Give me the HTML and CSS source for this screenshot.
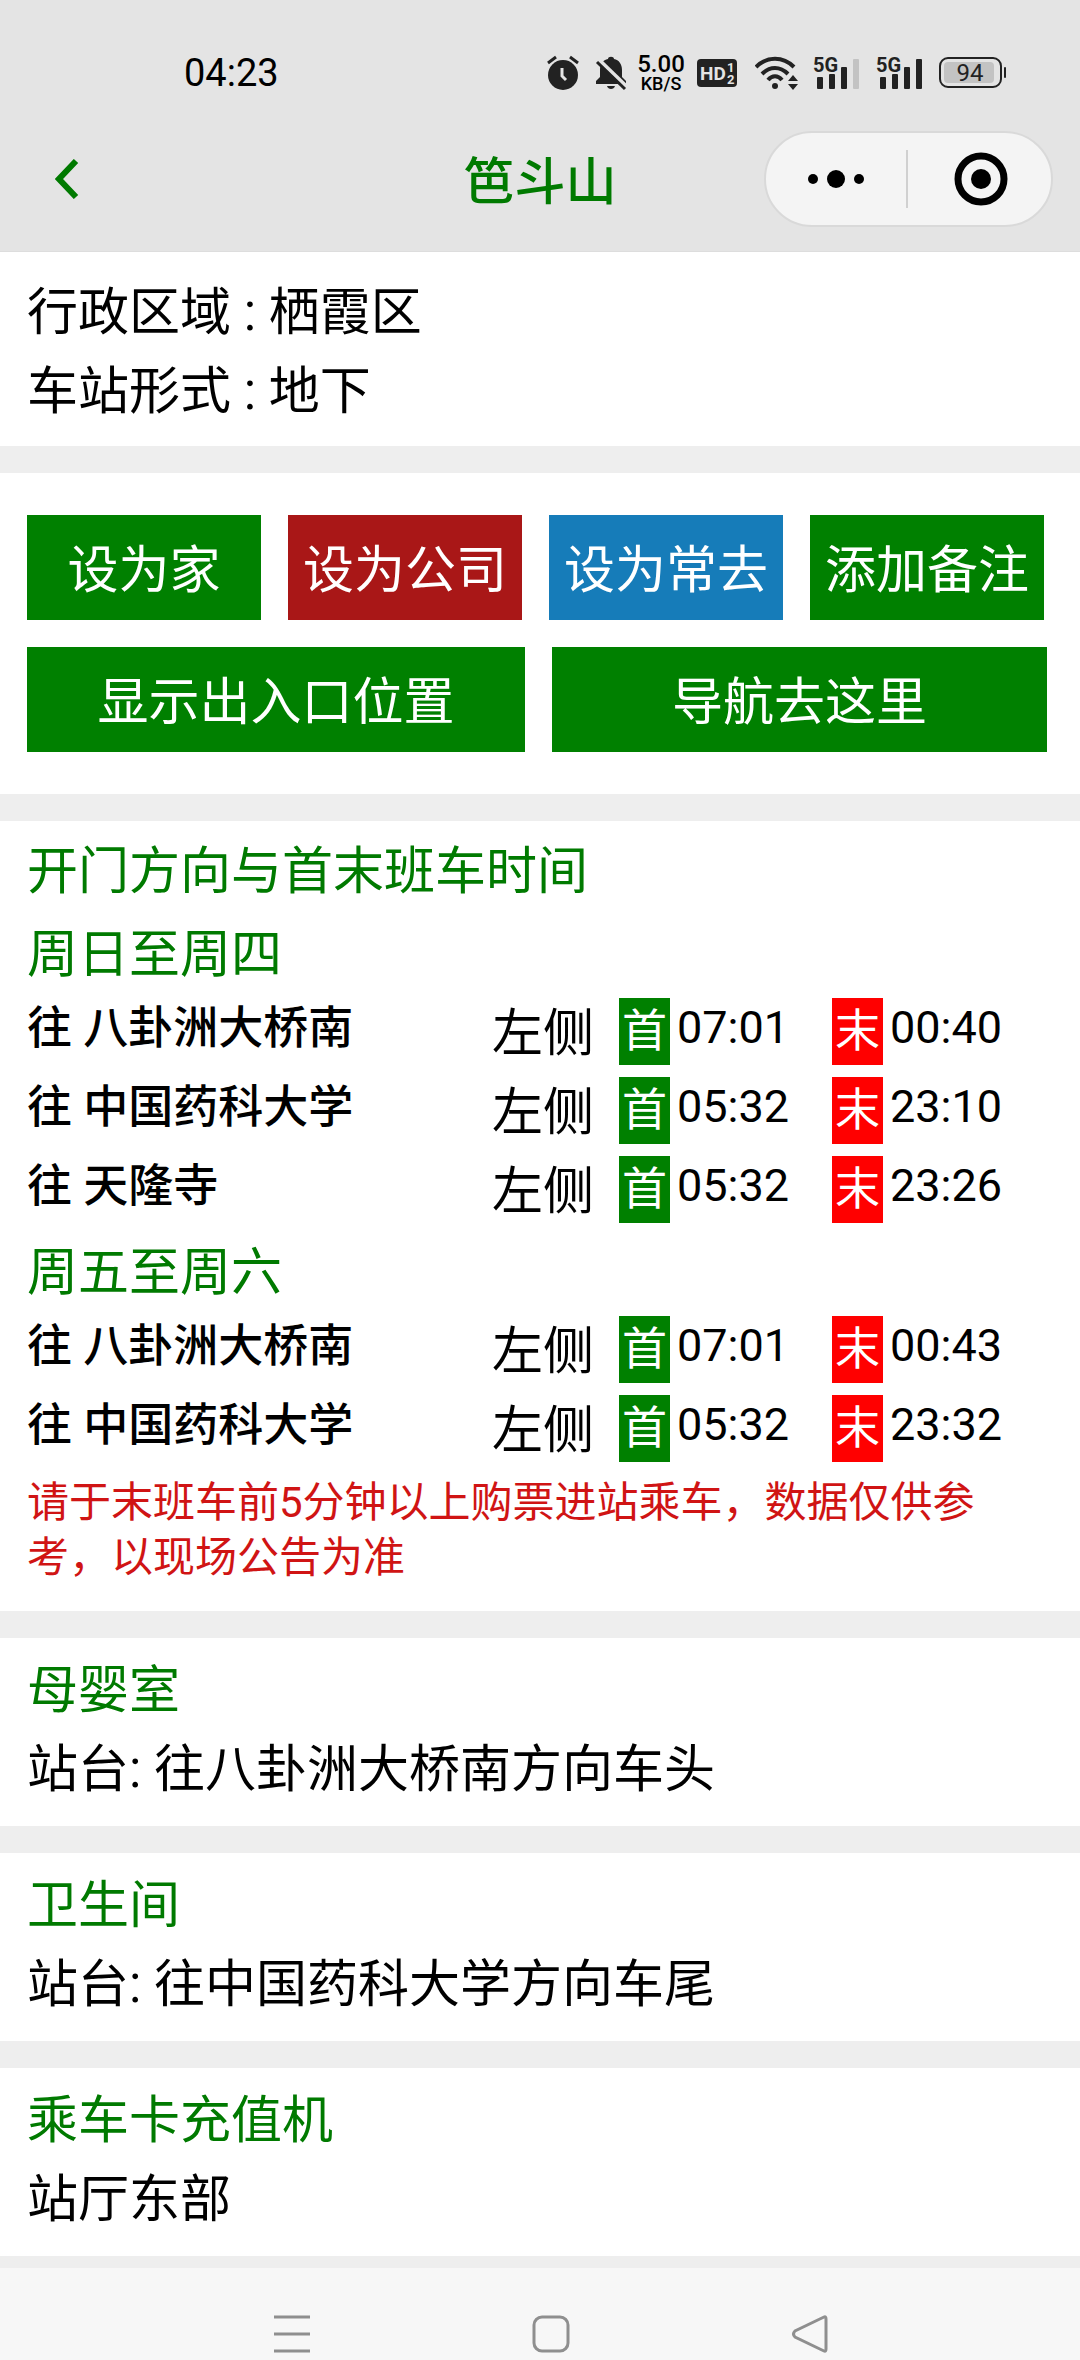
FILE: index.html
```html
<!DOCTYPE html>
<html lang="zh-CN">
<head>
  <meta charset="UTF-8" />
  <meta name="viewport" content="width=device-width, initial-scale=1.0"/>
  <title>笆斗山</title>
  <link rel="stylesheet" href="styles.css">
</head>
<body>

<header class="header">
  <div class="status-bar">
    <span class="clock">04:23</span>
    <div class="status-icons">
      <!-- alarm -->
      <svg width="32" height="36" viewBox="0 0 32 36">
        <circle cx="16" cy="20" r="15" fill="#222"/>
        <path d="M1 8L9 2M31 8L23 2" stroke="#222" stroke-width="3" fill="none"/>
        <path d="M15 13V21L19 25" stroke="#e4e4e4" stroke-width="3" fill="none"/>
      </svg>
      <!-- muted bell -->
      <svg width="32" height="36" viewBox="0 0 32 36">
        <path d="M1 29V26L5 22V15C5 9 8 5 13 4C13 1 19 1 19 4C24 5 27 9 27 15V22L31 26V29Z" fill="#222"/>
        <path d="M12 31H20C19 35 13 35 12 31Z" fill="#222"/>
        <path d="M4 5L32 32" stroke="#e4e4e4" stroke-width="4"/>
        <path d="M2 7L30 34" stroke="#222" stroke-width="3"/>
      </svg>
      <div class="net-speed"><span>5.00</span><span class="unit">KB/S</span></div>
      <svg class="hd" width="40" height="28" viewBox="0 0 40 28">
        <rect width="40" height="28" rx="4" fill="#222"/>
        <text x="3" y="21" class="hd-text">HD</text>
        <text x="30" y="13" class="hd-num">1</text>
        <text x="30" y="25" class="hd-num">2</text>
      </svg>
      <!-- wifi -->
      <svg class="wifi" width="44" height="36" viewBox="0 0 44 36">
        <path d="M1 12C12 1 28 1 39 12M7 19C15 11 25 11 33 19M13 25C17 20 23 20 27 25" stroke="#222" stroke-width="4" fill="none"/>
        <circle cx="20" cy="31" r="3" fill="#222"/>
        <path d="M33 26L38 20L43 26ZM33 29L38 35L43 29Z" fill="#222"/>
      </svg>
      <svg class="signal" width="47" height="44" viewBox="0 -4 47 44">
        <text x="0" y="17" class="g5">5G</text>
        <rect x="4" y="22" width="6" height="12" rx="1" fill="#222"/>
        <rect x="16" y="19" width="6" height="15" rx="1" fill="#222"/>
        <rect x="28" y="12" width="6" height="22" rx="1" fill="#222"/>
        <rect x="40" y="4" width="6" height="30" rx="1" fill="#c3c3c3"/>
      </svg>
      <svg class="signal" width="47" height="44" viewBox="0 -4 47 44">
        <text x="0" y="17" class="g5">5G</text>
        <rect x="4" y="22" width="6" height="12" rx="1" fill="#222"/>
        <rect x="16" y="19" width="6" height="15" rx="1" fill="#222"/>
        <rect x="28" y="12" width="6" height="22" rx="1" fill="#222"/>
        <rect x="40" y="4" width="6" height="30" rx="1" fill="#222"/>
      </svg>
      <!-- battery -->
      <svg class="battery" width="68" height="32" viewBox="0 0 68 32">
        <rect x="1" y="1" width="61" height="29" rx="8" fill="none" stroke="#222" stroke-width="2"/>
        <rect x="5" y="5" width="50" height="21" rx="4" fill="#c3c3c3"/>
        <rect x="65" y="10" width="2" height="11" rx="1" fill="#222"/>
        <text x="31" y="24" text-anchor="middle" class="bat-text">94</text>
      </svg>
    </div>
  </div>
  <div class="title-bar">
    <button class="back" aria-label="返回">
      <svg width="24" height="40" viewBox="0 0 24 40"><path d="M21 2L4 20L21 38" fill="none" stroke="#007a00" stroke-width="6"/></svg>
    </button>
    <h1>笆斗山</h1>
    <div class="capsule">
      <button aria-label="更多">
        <svg width="58" height="20" viewBox="0 0 58 20"><circle cx="6" cy="10" r="5"/><circle cx="29" cy="10" r="9"/><circle cx="52" cy="10" r="5"/></svg>
      </button>
      <button class="close" aria-label="关闭">
        <svg width="54" height="54" viewBox="0 0 54 54"><circle cx="27" cy="27" r="23" fill="none" stroke="#000" stroke-width="7"/><circle cx="27" cy="27" r="10"/></svg>
      </button>
    </div>
  </div>
</header>

<main>
  <section class="info">
    <p>行政区域 : 栖霞区</p>
    <p>车站形式 : 地下</p>
  </section>

  <section class="actions">
    <div class="row four">
      <button class="btn">设为家</button>
      <button class="btn company">设为公司</button>
      <button class="btn often">设为常去</button>
      <button class="btn">添加备注</button>
    </div>
    <div class="row two">
      <button class="btn">显示出入口位置</button>
      <button class="btn">导航去这里</button>
    </div>
  </section>

  <section class="times">
    <h2>开门方向与首末班车时间</h2>
    <h3>周日至周四</h3>
    <table>
      <tr>
        <th scope="row">往 八卦洲大桥南</th>
        <td class="side">左侧</td>
        <td class="first"><span class="tag">首</span><span class="time">07:01</span></td>
        <td class="last"><span class="tag red">末</span><span class="time">00:40</span></td>
      </tr>
      <tr>
        <th scope="row">往 中国药科大学</th>
        <td class="side">左侧</td>
        <td class="first"><span class="tag">首</span><span class="time">05:32</span></td>
        <td class="last"><span class="tag red">末</span><span class="time">23:10</span></td>
      </tr>
      <tr>
        <th scope="row">往 天隆寺</th>
        <td class="side">左侧</td>
        <td class="first"><span class="tag">首</span><span class="time">05:32</span></td>
        <td class="last"><span class="tag red">末</span><span class="time">23:26</span></td>
      </tr>
    </table>
    <h3>周五至周六</h3>
    <table>
      <tr>
        <th scope="row">往 八卦洲大桥南</th>
        <td class="side">左侧</td>
        <td class="first"><span class="tag">首</span><span class="time">07:01</span></td>
        <td class="last"><span class="tag red">末</span><span class="time">00:43</span></td>
      </tr>
      <tr>
        <th scope="row">往 中国药科大学</th>
        <td class="side">左侧</td>
        <td class="first"><span class="tag">首</span><span class="time">05:32</span></td>
        <td class="last"><span class="tag red">末</span><span class="time">23:32</span></td>
      </tr>
    </table>
    <p class="notice">请于末班车前5分钟以上购票进站乘车，数据仅供参考，以现场公告为准</p>
  </section>

  <section class="facility">
    <h2>母婴室</h2>
    <p>站台: 往八卦洲大桥南方向车头</p>
  </section>

  <section class="facility">
    <h2>卫生间</h2>
    <p>站台: 往中国药科大学方向车尾</p>
  </section>

  <section class="facility">
    <h2>乘车卡充值机</h2>
    <p>站厅东部</p>
  </section>
</main>

<nav class="nav-bar">
  <button aria-label="任务">
    <svg width="38" height="38" viewBox="0 0 38 38"><path d="M1 2H37M1 19H37M1 36H37"/></svg>
  </button>
  <button aria-label="主页">
    <svg width="38" height="38" viewBox="0 0 38 38"><rect x="2" y="2" width="34" height="34" rx="8"/></svg>
  </button>
  <button aria-label="后退">
    <svg width="38" height="38" viewBox="0 0 38 38"><path d="M33 2Q35 1 35 4V34Q35 37 33 36L4 22Q1 19 4 16Z"/></svg>
  </button>
</nav>

</body>
</html>
```
FILE: styles.css
```css
* {
  box-sizing: border-box;
}
body {
  margin: 0;
  min-height: 100vh;
  display: flex;
  flex-direction: column;
  background-color: #eee;
  color: #000;
  font-family: Roboto, "Noto Sans CJK SC", sans-serif;
  font-size: 51px;
  line-height: 79px;
}
h1, h2, h3, p {
  margin: 0;
  font-size: 51px;
  font-weight: 400;
}
button {
  margin: 0;
  padding: 0;
  border: none;
  background: none;
  font: inherit;
  cursor: pointer;
}
svg {
  display: block;
}

/* header */
.header {
  background-color: #e4e4e4;
  border-bottom: 1px solid #ddd;
}
.status-bar {
  display: flex;
  justify-content: space-between;
  align-items: center;
  height: 107px;
  padding: 38px 73px 0 184px;
  line-height: 40px;
}
.clock {
  font-size: 38px;
}
.status-icons {
  display: flex;
  align-items: center;
}
.status-icons > svg {
  margin-right: 16px;
}
.status-icons > .hd {
  margin-right: 18px;
}
.status-icons > .wifi {
  margin-right: 14px;
}
.status-icons > .battery {
  margin-right: 0;
}
.net-speed {
  display: flex;
  flex-direction: column;
  align-items: center;
  width: 52px;
  margin: 0 10px 0 -8px;
  font-size: 24px;
  font-weight: 500;
  line-height: 22px;
}
.net-speed .unit {
  font-size: 18px;
  line-height: 18px;
}
.hd-text {
  font-size: 19px;
  font-weight: 700;
  fill: #e4e4e4;
}
.hd-num {
  font-size: 13px;
  font-weight: 700;
  fill: #e4e4e4;
}
.g5 {
  font-size: 20px;
  font-weight: 700;
  fill: #222;
}
.bat-text {
  font-size: 24px;
  fill: #222;
}
.title-bar {
  display: grid;
  grid-template-columns: 1fr auto 1fr;
  align-items: center;
  height: 144px;
  padding: 0 27px;
}
.title-bar h1 {
  padding-top: 6px;
  color: #007a00;
  font-weight: 500;
}
.back {
  justify-self: start;
  padding: 20px 28px;
}
.capsule {
  justify-self: end;
  display: flex;
  width: 289px;
  height: 96px;
  border: 2px solid #d9d9d9;
  border-radius: 48px;
  background-color: #f4f4f4;
  align-items: center;
}
.capsule button {
  flex: 1;
  height: 58px;
  display: flex;
  justify-content: center;
  align-items: center;
}
.capsule .close {
  padding-left: 4px;
  border-left: 2px solid #d0d0d0;
}

/* sections */
section {
  margin-bottom: 27px;
  padding: 13px 27px 17px;
  background-color: #fff;
}
h2, h3 {
  color: #007a00;
}
.info {
  padding: 21px 27px 15px;
}
.actions {
  padding: 42px 27px;
}
.row {
  display: grid;
  gap: 27px;
}
.four {
  grid-template-columns: repeat(4, 1fr);
  padding-right: 9px;
  margin-bottom: 27px;
}
.two {
  grid-template-columns: 498fr 495fr;
  padding-right: 6px;
}
.btn {
  height: 105px;
  padding-top: 5px;
  background-color: #008000;
  color: white;
  white-space: nowrap;
}
.company {
  background-color: #a91717;
}
.often {
  background-color: #167cb9;
}

/* timetable */
.times {
  padding: 11px 27px 26px;
}
.times h3 {
  padding-top: 6px;
  line-height: 75px;
}
table {
  width: 100%;
  border-collapse: collapse;
  table-layout: fixed;
}
th, td {
  height: 79px;
  padding: 6px 0 0;
  text-align: left;
  vertical-align: top;
  line-height: 67px;
  white-space: nowrap;
}
th {
  font-size: 45px;
  font-weight: 500;
  line-height: 61px;
}
.side {
  width: 127px;
  line-height: 71px;
}
.first {
  width: 213px;
}
.last {
  width: 221px;
}
.tag, .time {
  display: inline-block;
  vertical-align: top;
  font-size: 45px;
}
.tag {
  padding: 0 3px;
  margin-right: 7px;
  background-color: #008000;
  color: white;
}
.time {
  line-height: 59px;
}
.red {
  background-color: #f00;
}
.notice {
  padding-top: 7px;
  color: #d01414;
  font-size: 42px;
  line-height: 55px;
}

/* system navigation */
.nav-bar {
  display: grid;
  grid-template-columns: repeat(3, 1fr);
  flex: 1;
  margin-top: -15px;
  padding: 40px 13% 0 15%;
  background-color: #f7f7f7;
}
.nav-bar button {
  display: flex;
  justify-content: center;
  align-items: center;
}
.nav-bar svg {
  fill: none;
  stroke: #8f8f8f;
  stroke-width: 3;
}
```
